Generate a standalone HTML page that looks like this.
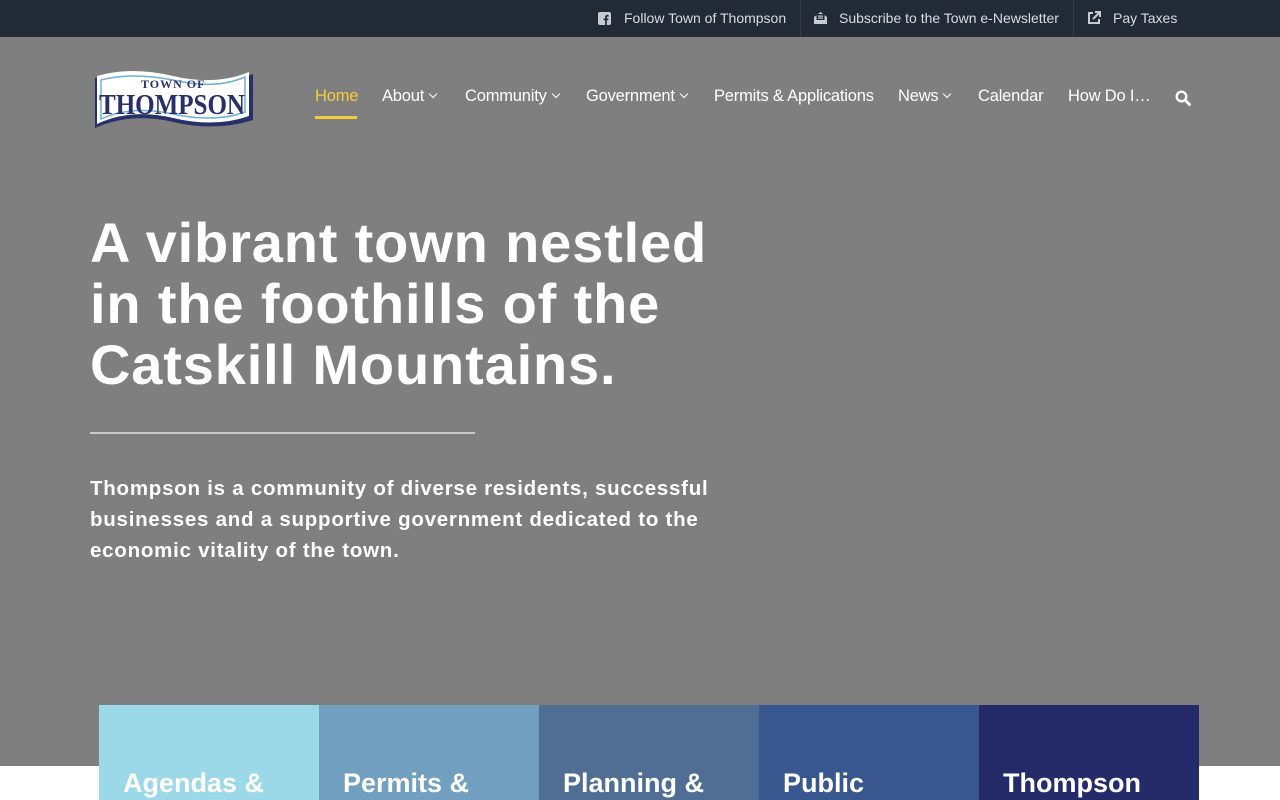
<!DOCTYPE html>
<html><head><meta charset="utf-8"><style>
*{margin:0;padding:0;box-sizing:border-box}
body{width:1280px;height:800px;overflow:hidden;background:#fff;font-family:"Liberation Sans",Arial,sans-serif;position:relative}
.top{position:absolute;top:0;left:0;width:1280px;height:37px;background:#222a36;color:#d8dce2;font-size:14px}
.top .it{position:absolute;top:0;height:37px;line-height:36px;white-space:nowrap}
.sep{position:absolute;top:0;width:1px;height:37px;background:#343c48}
.hero{position:absolute;top:37px;left:0;width:1280px;height:729px;background:#7f7f7f}
.nav{position:absolute;font-size:16.5px;color:#fff;white-space:nowrap;letter-spacing:-0.2px}
.nav span{position:absolute;top:0}
.car{display:inline-block;width:6px;height:6px;border-right:1.6px solid #fff;border-bottom:1.6px solid #fff;transform:rotate(45deg);margin-left:6px;position:relative;top:-4px}
h1{position:absolute;left:90px;top:212px;font-size:56px;line-height:61px;color:#fff;font-weight:bold;letter-spacing:0.85px;white-space:nowrap}
.rule{position:absolute;left:90px;top:432px;width:385px;height:2px;background:#c8c8c8}
p{position:absolute;left:90px;top:473px;width:635px;font-size:20.5px;line-height:31px;color:#fff;font-weight:bold;letter-spacing:0.75px}
.tile{position:absolute;top:705px;width:220px;height:95px;color:#fff;font-weight:bold;font-size:27px;padding:63px 0 0 24px}
</style></head><body>
<div class="top">
<div class="it" style="left:598px"><svg width="13" height="13" viewBox="0 0 13 13" style="vertical-align:-2px;margin-right:13px"><rect width="13" height="13" rx="2" fill="#c8ccd2"/><path d="M8.8 13V8.3h1.5l.2-1.8H8.8V5.4c0-.5.2-.8.9-.8h.9V3c-.2 0-.7-.1-1.3-.1-1.3 0-2.2.8-2.2 2.2v1.4H5.6v1.8h1.5V13z" fill="#222a36"/></svg>Follow Town of Thompson</div>
<div class="sep" style="left:800px"></div>
<div class="it" style="left:813px"><svg width="15" height="14" viewBox="0 0 15 14" style="vertical-align:-2px;margin-right:11px"><path d="M1 6 7.5 1 14 6v7H1z" fill="#c8ccd2"/><rect x="3.5" y="3" width="8" height="6" fill="#222a36"/><rect x="5" y="4.5" width="5" height="1.2" fill="#c8ccd2"/><rect x="5" y="6.5" width="5" height="1.2" fill="#c8ccd2"/></svg>Subscribe to the Town e-Newsletter</div>
<div class="sep" style="left:1073px"></div>
<div class="it" style="left:1087px"><svg width="14" height="14" viewBox="0 0 14 14" style="vertical-align:-2px;margin-right:12px"><path d="M6 2H2v10h10V8" fill="none" stroke="#c8ccd2" stroke-width="2"/><path d="M8 1h5v5M13 1 6 8" fill="none" stroke="#c8ccd2" stroke-width="2"/></svg>Pay Taxes</div>
</div>
<div class="hero">
<svg style="position:absolute;left:91px;top:33px" width="165" height="62" viewBox="0 0 165 62">
<path d="M4 8 Q40 -2 82 8 Q124 18 162 4 L162 50 Q124 62 82 52 Q40 42 4 58Z" fill="#28306a"/>
<path d="M6 6 Q40 -4 82 6 Q124 16 158 2 L158 46 Q124 58 82 48 Q40 38 6 54Z" fill="#fff"/>
<path d="M10 10 Q40 2 82 10 Q124 20 154 7 L154 42 Q124 53 82 44 Q40 35 10 49Z" fill="none" stroke="#6fb0d8" stroke-width="1.5"/>
<text x="50" y="18" font-family="Liberation Serif,serif" font-weight="bold" font-size="12" fill="#28306a" letter-spacing="1">TOWN OF</text>
<text x="8" y="44" font-family="Liberation Serif,serif" font-weight="bold" font-size="28" fill="#28306a" textLength="146" lengthAdjust="spacingAndGlyphs">THOMPSON</text>
</svg>
<div class="nav" style="top:50px;left:0">
<span style="left:315px;color:#f2cf3a">Home</span>
<div style="position:absolute;left:315px;top:29px;width:42px;height:3px;background:#f2cf3a"></div>
<span style="left:382px">About<i class="car"></i></span>
<span style="left:465px">Community<i class="car"></i></span>
<span style="left:586px">Government<i class="car"></i></span>
<span style="left:714px">Permits &amp; Applications</span>
<span style="left:898px">News<i class="car"></i></span>
<span style="left:978px">Calendar</span>
<span style="left:1068px">How Do I…</span>
<svg style="position:absolute;left:1175px;top:3px" width="16" height="16" viewBox="0 0 16 16"><circle cx="6.5" cy="6.5" r="4.8" fill="none" stroke="#fff" stroke-width="2.4"/><path d="M10 10l4.5 4.5" stroke="#fff" stroke-width="2.8" stroke-linecap="round"/></svg>
</div>
</div>
<h1>A vibrant town nestled<br>in the foothills of the<br>Catskill Mountains.</h1>
<div class="rule"></div>
<p>Thompson is a community of diverse residents, successful businesses and a supportive government dedicated to the economic vitality of the town.</p>
<div class="tile" style="left:99px;background:#9bd9e8">Agendas &amp;</div>
<div class="tile" style="left:319px;background:#709fbf">Permits &amp;</div>
<div class="tile" style="left:539px;background:#506e94">Planning &amp;</div>
<div class="tile" style="left:759px;background:#38578f">Public</div>
<div class="tile" style="left:979px;background:#252a69">Thompson</div>
</body></html>
